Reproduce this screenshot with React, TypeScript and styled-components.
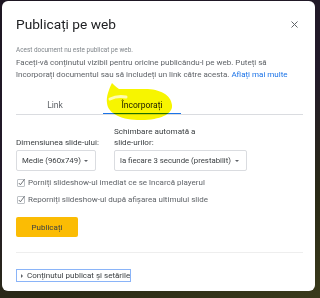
import React, { useState } from 'react';
import styled, { createGlobalStyle } from 'styled-components';

const GlobalStyle = createGlobalStyle`
  html, body {
    margin: 0;
    padding: 0;
    width: 320px;
    height: 298px;
    overflow: hidden;
  }
  body {
    background: linear-gradient(160deg, #1d1622 0%, #231a2a 45%, #2a2a16 75%, #3a3a1c 100%);
    font-family: Roboto, 'Noto Sans', Arial, sans-serif;
  }
`;

const Dialog = styled.div`
  position: relative;
  box-sizing: border-box;
  margin: 1px 0 0 2px;
  width: 313px;
  height: 290px;
  padding: 0 12px 0 14px;
  background: #fff;
  border-radius: 6px;
  display: flex;
  flex-direction: column;
`;

const Header = styled.div`
  display: flex;
  align-items: center;
  justify-content: space-between;
  padding-top: 14px;
  height: 18px;
`;

const Title = styled.h1`
  margin: 0;
  font-size: 13.7px;
  font-weight: 400;
  line-height: 18px;
  color: #202124;
`;

const CloseButton = styled.button`
  width: 18px;
  height: 18px;
  border: none;
  background: transparent;
  padding: 0;
  display: flex;
  align-items: center;
  justify-content: center;
  cursor: pointer;
`;

const Note = styled.p`
  margin: 12.5px 0 0;
  font-size: 6.4px;
  line-height: 9px;
  color: #80868b;
`;

const Intro = styled.p`
  margin: 2.5px 0 0;
  font-size: 8px;
  line-height: 12px;
  color: #5f6368;
  white-space: nowrap;
`;

const LearnMore = styled.a`
  color: #1a73e8;
  text-decoration: none;
`;

const TabBar = styled.div`
  position: relative;
  margin-top: 13px;
  display: flex;
  gap: 9px;
  border-bottom: 1px solid #dadce0;
`;

const Tab = styled.button<{ $active?: boolean }>`
  box-sizing: border-box;
  width: 78px;
  height: 20px;
  padding: 2px 0 0;
  border: none;
  border-bottom: 1px solid ${(p) => (p.$active ? '#1a73e8' : 'transparent')};
  background: transparent;
  font-family: inherit;
  font-size: 8.5px;
  color: ${(p) => (p.$active ? '#202124' : '#5f6368')};
  display: flex;
  align-items: center;
  justify-content: center;
  cursor: pointer;
`;

const Highlight = styled.svg`
  position: absolute;
  left: 89px;
  top: -11px;
  mix-blend-mode: multiply;
  pointer-events: none;
`;

const Fields = styled.div`
  margin-top: 10.5px;
  display: grid;
  grid-template-columns: 80px 133px;
  column-gap: 18px;
  row-gap: 2.5px;
  align-items: end;
`;

const Label = styled.label`
  font-size: 8.1px;
  line-height: 11px;
  color: #3c4043;
  white-space: nowrap;
`;

const Select = styled.div`
  box-sizing: border-box;
  height: 21px;
  padding: 0 7px 0 5px;
  border: 1px solid #dadce0;
  border-radius: 2px;
  display: flex;
  align-items: center;
  justify-content: space-between;
  font-size: 7.8px;
  color: #3c4043;
  white-space: nowrap;
`;

const Caret = styled.span`
  width: 0;
  height: 0;
  border-left: 2.5px solid transparent;
  border-right: 2.5px solid transparent;
  border-top: 2.5px solid #5f6368;
`;

const Options = styled.div`
  margin-top: 5px;
  display: flex;
  flex-direction: column;
  gap: 5px;
`;

const CheckRow = styled.label`
  display: flex;
  align-items: center;
  gap: 2px;
  height: 12px;
  padding-left: 1px;
  font-size: 8px;
  color: #5f6368;
`;

const PublishButton = styled.button`
  margin-top: 12px;
  width: 62px;
  height: 20px;
  border: none;
  border-radius: 2px;
  background: #fbbc04;
  font-family: inherit;
  font-size: 8px;
  color: #3c4043;
  cursor: pointer;
`;

const Divider = styled.hr`
  margin: 15px 0 0;
  border: none;
  height: 1px;
  background: #eeeeee;
`;

const Disclosure = styled.button`
  margin-top: 16px;
  box-sizing: border-box;
  width: 115px;
  height: 13px;
  padding: 0 0 0 4px;
  border: 1px solid #8ab4f8;
  background: #fff;
  display: flex;
  align-items: center;
  gap: 4px;
  font-family: inherit;
  font-size: 8px;
  color: #3c4043;
  white-space: nowrap;
  cursor: pointer;
`;

const Arrow = styled.span`
  width: 0;
  height: 0;
  border-top: 2px solid transparent;
  border-bottom: 2px solid transparent;
  border-left: 2.5px solid #5f6368;
`;

const CheckIcon = () => (
  <svg width="9" height="9" viewBox="0 0 9 9">
    <rect x="0.5" y="1.5" width="7" height="7" rx="0.5" fill="none" stroke="#bdc1c6" />
    <path d="M1.8 5 L3.4 6.8 L7.6 1.2" fill="none" stroke="#5f6368" strokeWidth="0.9" />
  </svg>
);

const App: React.FC = () => {
  const [tab, setTab] = useState('embed');

  return (
    <>
      <GlobalStyle />
      <Dialog>
        <Header>
          <Title>Publicați pe web</Title>
          <CloseButton aria-label="Închideți">
            <svg width="7" height="7" viewBox="0 0 7 7">
              <path d="M0.5 0.5 L6.5 6.5 M6.5 0.5 L0.5 6.5" stroke="#5f6368" strokeWidth="1" />
            </svg>
          </CloseButton>
        </Header>
        <Note>Acest document nu este publicat pe web.</Note>
        <Intro>
          Faceți-vă conținutul vizibil pentru oricine publicându-l pe web. Puteți să
          <br />
          încorporați documentul sau să includeți un link către acesta.{' '}
          <LearnMore href="#">Aflați mai multe</LearnMore>
        </Intro>
        <TabBar>
          <Tab $active={tab === 'link'} onClick={() => setTab('link')}>Link</Tab>
          <Tab $active={tab === 'embed'} onClick={() => setTab('embed')}>Încorporați</Tab>
          <Highlight width="70" height="40" viewBox="0 0 70 40">
            <path
              d="M7 0 C4 6 1 14 2 20 C3 32 20 38 40 37 C58 36 68 30 67 22 C66 12 55 6 40 6 L14 6 C11 4 9 2 7 0 Z"
              fill="#f7f500"
            />
            <path d="M5 16 C9 14 15 13 21 14" fill="none" stroke="#fffbb0" strokeWidth="3" strokeLinecap="round" />
          </Highlight>
        </TabBar>
        <Fields>
          <Label>Dimensiunea slide-ului:</Label>
          <Label>
            Schimbare automată a
            <br />
            slide-urilor:
          </Label>
          <Select>
            Medie (960x749) <Caret />
          </Select>
          <Select>
            la fiecare 3 secunde (prestabilit) <Caret />
          </Select>
        </Fields>
        <Options>
          <CheckRow>
            <CheckIcon />
            Porniți slideshow-ul imediat ce se încarcă playerul
          </CheckRow>
          <CheckRow>
            <CheckIcon />
            Reporniți slideshow-ul după afișarea ultimului slide
          </CheckRow>
        </Options>
        <PublishButton>Publicați</PublishButton>
        <Divider />
        <Disclosure>
          <Arrow />
          Conținutul publicat și setările
        </Disclosure>
      </Dialog>
    </>
  );
};

export default App;
